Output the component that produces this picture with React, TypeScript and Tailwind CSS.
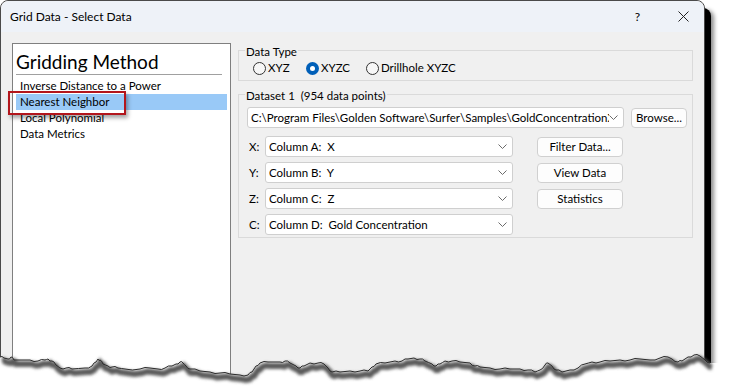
import React from "react";

const tear: [number, number][] = [
  [0, 357], [4, 358], [8, 359], [11, 357], [14, 360], [30, 360], [38, 361], [45, 360], [48, 359],
  [52, 361], [56, 365], [60, 368], [66, 368], [72, 369], [85, 368], [92, 366], [96, 362], [98, 359],
  [100, 360], [103, 364], [108, 366], [112, 367], [118, 368], [125, 369], [140, 369], [150, 368],
  [158, 369], [165, 368], [172, 366], [176, 364], [180, 362], [183, 363], [186, 366], [190, 369],
  [200, 371], [210, 372], [220, 373], [230, 374], [240, 375], [248, 375], [252, 372], [256, 366],
  [260, 363], [268, 362], [280, 362], [285, 361], [290, 363], [296, 366], [300, 368], [304, 366],
  [310, 363], [318, 363], [324, 364], [328, 368], [332, 372], [340, 372], [350, 371], [360, 371],
  [368, 371], [372, 367], [376, 364], [385, 363], [395, 361], [402, 361], [408, 359], [414, 358],
  [420, 359], [425, 361], [432, 364], [436, 366], [440, 364], [445, 361], [452, 361], [460, 362],
  [470, 363], [475, 366], [480, 367], [490, 368], [500, 369], [510, 369], [520, 369], [528, 370],
  [535, 372], [540, 370], [545, 365], [548, 363], [552, 366], [556, 370], [562, 372], [570, 370],
  [578, 368], [585, 364], [592, 362], [600, 362], [610, 361], [620, 360], [630, 360], [640, 359],
  [650, 360], [660, 358], [668, 357], [672, 359], [678, 362], [682, 361], [688, 357], [694, 355],
  [700, 356], [705, 360], [710, 363],
];

// small deterministic wobble so the edge looks torn rather than polygonal
const edge = tear.flatMap(([x, y], i) => {
  const next = tear[i + 1];
  if (!next) return [[x, y]];
  const mx = (x + next[0]) / 2;
  const my = (y + next[1]) / 2 + ((i * 7) % 3) - 1;
  return [[x, y], [mx, my]];
});
const edgeLine = edge.map(([x, y], i) => `${i ? "L" : "M"}${x} ${y}`).join(" ");
const fillPath = `${edgeLine} L736 363 L736 389 L0 389 Z`;

const Chevron = () => (
  <svg width="9" height="5" viewBox="0 0 9 5" className="shrink-0">
    <polyline points="0.5,0.5 4.5,4.5 8.5,0.5" fill="none" stroke="#6b6b6b" strokeWidth="1" />
  </svg>
);

const Combo = ({ text, className = "" }: { text: string; className?: string }) => (
  <div
    className={`flex items-center h-[21px] bg-white border border-[#cfcfcf] rounded-[3px] pl-[3px] pr-[5px] ${className}`}
  >
    <span className="flex-1 min-w-0 overflow-hidden whitespace-pre">{text}</span>
    <Chevron />
  </div>
);

const Button = ({ label, className = "" }: { label: string; className?: string }) => (
  <div
    className={`flex items-center justify-center h-[20px] bg-[#fdfdfd] border border-[#d0d0d0] rounded-[4px] ${className}`}
  >
    {label}
  </div>
);

const Radio = ({ label, checked }: { label: string; checked?: boolean }) => (
  <div className="flex items-center gap-[2px]">
    {checked ? (
      <div className="w-[13px] h-[13px] rounded-full bg-[#005fb8] flex items-center justify-center">
        <div className="w-[5px] h-[5px] rounded-full bg-white" />
      </div>
    ) : (
      <div className="w-[13px] h-[13px] rounded-full border border-[#333] bg-[#f7f7f7]" />
    )}
    <span>{label}</span>
  </div>
);

const rows = [
  { k: "X:", v: "Column A:  X", btn: "Filter Data..." },
  { k: "Y:", v: "Column B:  Y", btn: "View Data" },
  { k: "Z:", v: "Column C:  Z", btn: "Statistics" },
  { k: "C:", v: "Column D:  Gold Concentration", btn: "" },
];

const methods = ["Inverse Distance to a Power", "Nearest Neighbor", "Local Polynomial", "Data Metrics"];

export default function App() {
  return (
    <div className="relative w-[736px] h-[389px] bg-white overflow-hidden font-['Segoe_UI','Lato',sans-serif] text-[11.5px] leading-[16px] text-black">
      <div className="w-[705px] h-[389px] flex flex-col border border-[#4a4a4a] rounded-t-[8px] bg-[#f0f0f0] shadow-[6px_8px_0_0_#000,9px_10px_4px_0_rgba(0,0,0,0.45)]">
        {/* title bar */}
        <div className="h-[31px] flex items-center pl-[9px] pr-[15px] bg-[#eef2f8] rounded-t-[8px] text-[12px]">
          <span className="flex-1">Grid Data - Select Data</span>
          <span className="mr-[38px]">?</span>
          <svg width="11" height="11" viewBox="0 0 11 11">
            <path d="M0.5 0.5 L10.5 10.5 M10.5 0.5 L0.5 10.5" stroke="#222" strokeWidth="1" />
          </svg>
        </div>

        <div className="flex-1 flex pl-[11px] pt-[10px] gap-[7px]">
          {/* method list */}
          <div className="relative w-[219px] mt-[1px] bg-white border border-[#7f7f7f] border-b-0">
            <div className="ml-[3px] mr-[8px] pt-[5px] text-[19px] leading-[25px] border-b border-[#a0a0a0]">
              Gridding Method
            </div>
            <div className="mt-[3px]">
              {methods.map((m) => (
                <div
                  key={m}
                  className={`mx-[3px] pl-[4px] h-[16px] leading-[16px] ${m === "Nearest Neighbor" ? "bg-[#99c9f7]" : ""}`}
                >
                  {m}
                </div>
              ))}
            </div>
            <div className="absolute left-[-5px] top-[47px] w-[118px] h-[24px] border-2 border-[#b3161c] shadow-[2px_3px_4px_rgba(0,0,0,0.35)]" />
          </div>

          {/* right column */}
          <div className="w-[455px] flex flex-col">
            <fieldset className="border border-[#dadada] pl-[14px] pt-[2px] pb-[4px]">
              <legend className="relative top-[2px] ml-[-8px] px-[1px]">Data Type</legend>
              <div className="flex items-center">
                <div className="w-[53px]">
                  <Radio label="XYZ" />
                </div>
                <div className="w-[60px]">
                  <Radio label="XYZC" checked />
                </div>
                <Radio label="Drillhole XYZC" />
              </div>
            </fieldset>

            <fieldset className="mt-[5px] border border-[#dadada] pl-[8px] pr-[5px] pt-[5px] pb-[2px]">
              <legend className="relative top-[2px] ml-[-2px] px-[1px] whitespace-pre">Dataset 1  (954 data points)</legend>
              <div className="flex items-center gap-[7px]">
                <Combo
                  className="w-[377px]"
                  text="C:\Program Files\Golden Software\Surfer\Samples\GoldConcentrationXYZC"
                />
                <Button label="Browse..." className="w-[56px] h-[20px]" />
              </div>
              <div className="mt-[8px] flex flex-col gap-[5px]">
                {rows.map((r) => (
                  <div key={r.k} className="flex items-center">
                    <span className="w-[18px] pl-[2px]">{r.k}</span>
                    <Combo className="w-[248px]" text={r.v} />
                    {r.btn && <Button label={r.btn} className="ml-[24px] w-[86px]" />}
                  </div>
                ))}
              </div>
            </fieldset>
          </div>
        </div>
      </div>

      {/* torn bottom edge */}
      <svg className="absolute left-0 top-0" width="736" height="389" viewBox="0 0 736 389">
        <defs>
          <filter id="blur" x="-5%" y="-50%" width="110%" height="200%">
            <feGaussianBlur stdDeviation="1.6" />
          </filter>
        </defs>
        <path d={fillPath} fill="#fff" />
        <path d={edgeLine} transform="translate(2 4)" fill="none" stroke="#5a5a5a" strokeWidth="6" filter="url(#blur)" />
        <path d={edgeLine} fill="none" stroke="#2b2b2b" strokeWidth="1" />
      </svg>
    </div>
  );
}
